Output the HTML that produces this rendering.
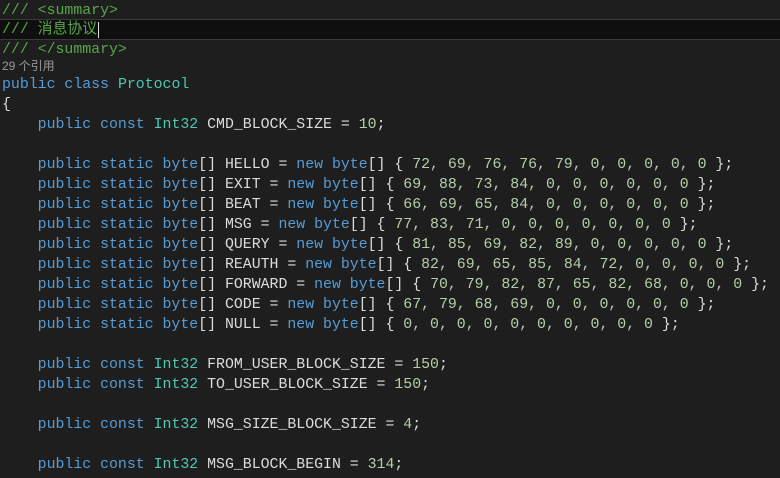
<!DOCTYPE html><html><head><meta charset="utf-8"><style>
body{margin:0;background:#1e1e1e;width:780px;height:478px;overflow:hidden;font-family:"Liberation Mono","Noto Sans CJK SC",monospace;font-size:14.87px;color:#dcdcdc}
.l{position:absolute;left:2px;height:20px;line-height:20px;white-space:pre;margin-top:1px}
.c{color:#57a64a}.k{color:#569cd6}.t{color:#4ec9b0}.n{color:#b5cea8}
.cl{position:absolute;left:2px;top:58px;font-size:12px;color:#999;line-height:16px;font-family:"Liberation Sans","Noto Sans CJK SC",sans-serif}
.hl{position:absolute;left:0;top:19px;width:780px;height:19px;background:#0f0f0f;border-top:1px solid #3a3a3a;border-bottom:1px solid #3a3a3a}
</style></head><body>
<div class="hl"></div>
<div class="l c" style="top:0">/// &lt;summary&gt;</div>
<div class="l c" style="top:19px">/// 消息协议<span style="border-left:1px solid #ddd;margin-left:1px"></span></div>
<div class="l c" style="top:39px">/// &lt;/summary&gt;</div>
<div class="cl">29 个引用</div>
<div class="l" style="top:74px"><span class="k">public class</span> <span class="t">Protocol</span></div>
<div class="l" style="top:94px">{</div>
<div class="l" style="top:114px">    <span class="k">public const</span> <span class="t">Int32</span> CMD_BLOCK_SIZE = <span class="n">10</span>;</div>
<div class="l" style="top:154px">    <span class="k">public static byte</span>[] HELLO = <span class="k">new byte</span>[] { <span class="n">72, 69, 76, 76, 79, 0, 0, 0, 0, 0</span> };</div>
<div class="l" style="top:174px">    <span class="k">public static byte</span>[] EXIT = <span class="k">new byte</span>[] { <span class="n">69, 88, 73, 84, 0, 0, 0, 0, 0, 0</span> };</div>
<div class="l" style="top:194px">    <span class="k">public static byte</span>[] BEAT = <span class="k">new byte</span>[] { <span class="n">66, 69, 65, 84, 0, 0, 0, 0, 0, 0</span> };</div>
<div class="l" style="top:214px">    <span class="k">public static byte</span>[] MSG = <span class="k">new byte</span>[] { <span class="n">77, 83, 71, 0, 0, 0, 0, 0, 0, 0</span> };</div>
<div class="l" style="top:234px">    <span class="k">public static byte</span>[] QUERY = <span class="k">new byte</span>[] { <span class="n">81, 85, 69, 82, 89, 0, 0, 0, 0, 0</span> };</div>
<div class="l" style="top:254px">    <span class="k">public static byte</span>[] REAUTH = <span class="k">new byte</span>[] { <span class="n">82, 69, 65, 85, 84, 72, 0, 0, 0, 0</span> };</div>
<div class="l" style="top:274px">    <span class="k">public static byte</span>[] FORWARD = <span class="k">new byte</span>[] { <span class="n">70, 79, 82, 87, 65, 82, 68, 0, 0, 0</span> };</div>
<div class="l" style="top:294px">    <span class="k">public static byte</span>[] CODE = <span class="k">new byte</span>[] { <span class="n">67, 79, 68, 69, 0, 0, 0, 0, 0, 0</span> };</div>
<div class="l" style="top:314px">    <span class="k">public static byte</span>[] NULL = <span class="k">new byte</span>[] { <span class="n">0, 0, 0, 0, 0, 0, 0, 0, 0, 0</span> };</div>
<div class="l" style="top:354px">    <span class="k">public const</span> <span class="t">Int32</span> FROM_USER_BLOCK_SIZE = <span class="n">150</span>;</div>
<div class="l" style="top:374px">    <span class="k">public const</span> <span class="t">Int32</span> TO_USER_BLOCK_SIZE = <span class="n">150</span>;</div>
<div class="l" style="top:414px">    <span class="k">public const</span> <span class="t">Int32</span> MSG_SIZE_BLOCK_SIZE = <span class="n">4</span>;</div>
<div class="l" style="top:454px">    <span class="k">public const</span> <span class="t">Int32</span> MSG_BLOCK_BEGIN = <span class="n">314</span>;</div>
</body></html>
